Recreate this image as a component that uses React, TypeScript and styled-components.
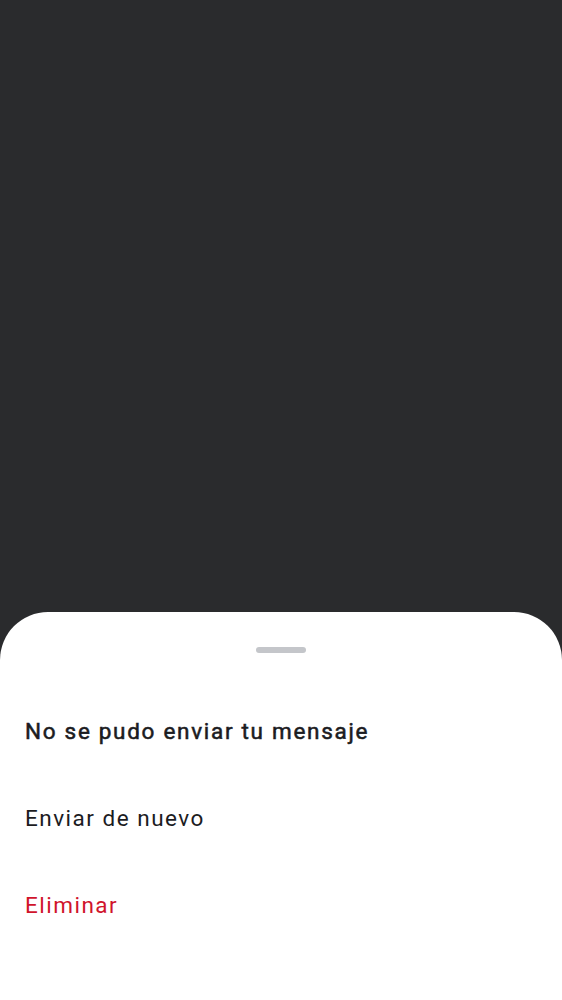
import React from "react";
import styled, { createGlobalStyle } from "styled-components";

const Global = createGlobalStyle`
  html, body { margin: 0; padding: 0; background: #2a2b2d; }
  body { font-family: Roboto, "Noto Sans", sans-serif; }
  #root { height: 1000px; }
`;

const Screen = styled.div`
  width: 562px;
  height: 1000px;
  background: #2a2b2d;
  display: flex;
  flex-direction: column;
  justify-content: flex-end;
`;

const Sheet = styled.div`
  height: 388px;
  background: #ffffff;
  border-radius: 48px 48px 0 0;
  display: flex;
  flex-direction: column;
`;

const HandleArea = styled.div`
  height: 75px;
  display: flex;
  justify-content: center;
  padding-top: 35px;
  box-sizing: border-box;
`;

const Handle = styled.div`
  width: 50px;
  height: 6px;
  border-radius: 3px;
  background: #c4c6ca;
`;

const Row = styled.div<{ $danger?: boolean; $title?: boolean }>`
  height: 87px;
  display: flex;
  align-items: center;
  padding: 0 25px;
  font-family: Roboto, sans-serif;
  font-size: 22.5px;
  font-weight: 400;
  letter-spacing: ${(p) => (p.$title ? "1.7px" : "1.5px")};
  -webkit-text-stroke: ${(p) => (p.$title ? "0.55px currentColor" : "0")};
  color: ${(p) => (p.$danger ? "#d0142c" : "#1c1c1f")};
`;

export default function App() {
  return (
    <Screen>
      <Global />
      <Sheet>
        <HandleArea>
          <Handle />
        </HandleArea>
        <Row $title>No se pudo enviar tu mensaje</Row>
        <Row>Enviar de nuevo</Row>
        <Row $danger>Eliminar</Row>
      </Sheet>
    </Screen>
  );
}
